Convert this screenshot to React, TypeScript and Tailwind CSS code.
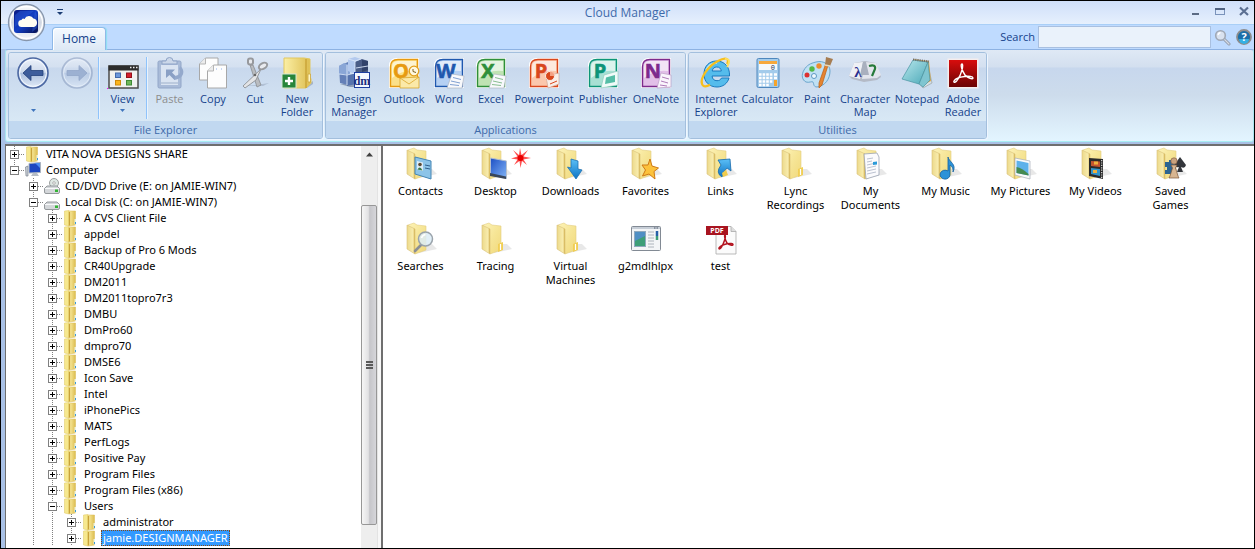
import type { ReactNode } from "react";
import clsx from "clsx";

const folderColors = { light: "#fdf3b8", mid: "#f1d97c", dark: "#d3ae45" };

function Icon({ children, size = 32 }: { children: ReactNode; size?: number }) {
    return (
        <svg width={size} height={size} viewBox={`0 0 ${size} ${size}`} aria-hidden="true" className="shrink-0 overflow-visible">
            {children}
        </svg>
    );
}

function Gradients() {
    return (
        <svg width="0" height="0" className="absolute" aria-hidden="true">
            <defs>
                <linearGradient id="folderBack" x1="0" y1="0" x2="1" y2="1">
                    <stop offset="0" stopColor={folderColors.light} />
                    <stop offset="0.5" stopColor="#f6e596" />
                    <stop offset="1" stopColor={folderColors.mid} />
                </linearGradient>
                <linearGradient id="folderFront" x1="0" y1="0" x2="1" y2="0">
                    <stop offset="0" stopColor="#ecd98a" />
                    <stop offset="0.75" stopColor="#f8ecae" />
                    <stop offset="1" stopColor={folderColors.dark} />
                </linearGradient>
                <linearGradient id="smallFolder" x1="0" y1="0" x2="1" y2="0">
                    <stop offset="0" stopColor="#fbefa5" />
                    <stop offset="1" stopColor="#dcbc4e" />
                </linearGradient>
                <linearGradient id="orb" x1="0" y1="0" x2="0" y2="1">
                    <stop offset="0" stopColor="#fdfdfe" />
                    <stop offset="0.5" stopColor="#cfd6e2" />
                    <stop offset="1" stopColor="#f4f7fb" />
                </linearGradient>
                <linearGradient id="orbBlue" x1="0" y1="0" x2="1" y2="1">
                    <stop offset="0" stopColor="#0b1a80" />
                    <stop offset="0.5" stopColor="#123fc4" />
                    <stop offset="1" stopColor="#06104f" />
                </linearGradient>
                <linearGradient id="navDisc" x1="0" y1="0" x2="0" y2="1">
                    <stop offset="0" stopColor="#eef3fb" />
                    <stop offset="0.48" stopColor="#ccd8eb" />
                    <stop offset="0.5" stopColor="#a9bcdc" />
                    <stop offset="1" stopColor="#e3edf9" />
                </linearGradient>
                <linearGradient id="screen" x1="0" y1="0" x2="1" y2="1">
                    <stop offset="0" stopColor="#1c4fc4" />
                    <stop offset="1" stopColor="#82b4f6" />
                </linearGradient>
                <linearGradient id="blueArrow" x1="0" y1="0" x2="0" y2="1">
                    <stop offset="0" stopColor="#5cc0f7" />
                    <stop offset="1" stopColor="#0d73c4" />
                </linearGradient>
                <linearGradient id="adobe" x1="0" y1="0" x2="0" y2="1">
                    <stop offset="0" stopColor="#d80d0d" />
                    <stop offset="1" stopColor="#6b0303" />
                </linearGradient>
                <linearGradient id="pad" x1="0" y1="0" x2="1" y2="1">
                    <stop offset="0" stopColor="#b9e7ec" />
                    <stop offset="1" stopColor="#4ba9b8" />
                </linearGradient>
            </defs>
        </svg>
    );
}

/* ---------- ribbon icons ---------- */

function NavIcon({ forward }: { forward?: boolean }) {
    return (
        <Icon>
            <g opacity={forward ? 0.5 : 1}>
                <circle cx="16" cy="16" r="15" fill="url(#navDisc)" stroke={forward ? "#7f93b8" : "#4d69a3"} strokeWidth="1.6" />
                <circle cx="16" cy="16" r="13.4" fill="none" stroke="#f5f9ff" strokeWidth="1" />
                <path
                    d={forward ? "M26 16 18 8.500V13.500H6V18.500H18V23.500Z" : "M6 16 14 8.500V13.500H26V18.500H14V23.500Z"}
                    fill={forward ? "#7089b8" : "#3d5c9b"}
                    stroke={forward ? "#5c75a6" : "#223f7a"}
                    strokeWidth="0.8"
                />
            </g>
        </Icon>
    );
}

const ViewIcon = () => (
    <Icon>
        <rect x="2" y="9" width="29" height="22" fill="#f1f1ef" stroke="#4b4b4b" strokeWidth="1.500" />
        <rect x="1.500" y="8.500" width="30" height="5" fill="#2c2c2c" />
        <path d="M23 10.500h1.500M26 10.500h1.500M29 10.500h1.500" stroke="#eee" strokeWidth="1.500" />
        <rect x="8.500" y="16" width="5" height="4.500" fill="#6c97da" stroke="#4168ab" />
        <rect x="19.500" y="16" width="5" height="4.500" fill="#d41c2c" stroke="#941018" />
        <rect x="8.500" y="23.500" width="5" height="4.500" fill="#fbb51c" stroke="#d18b0a" />
        <rect x="19.500" y="23.500" width="5" height="4.500" fill="#6fb65a" stroke="#3f8a35" />
        <rect x="0" y="31" width="1" height="1" fill="#f0f" />
    </Icon>
);

const PasteIcon = () => (
    <Icon>
        <rect x="4" y="4" width="23" height="27" rx="1.500" fill="#a9bbd8" stroke="#92a6c8" />
        <rect x="7" y="8" width="17" height="20" fill="#dae4f2" />
        <path d="M8 7V4h4a3.500 3.500 0 0 1 7 0h4v3Z" fill="#cbd7e9" stroke="#8fa4c7" />
        <path d="M12 12.500h9l-3 3 5 5-2.500 2.500-5-5-3.500 3Z" fill="#8aa0c5" />
        <path d="M26 9c6 4 4 13-6 14l1-4c5-1 6-4 4-7Z" fill="#94a9cc" />
        <path d="M7 26h17" stroke="#bccade" strokeWidth="2" />
    </Icon>
);

const CopyIcon = () => (
    <Icon>
        <path d="M2.500 7 8.500 1H21V23H2.500Z" fill="#fdfdfd" stroke="#a8a8a8" />
        <path d="M2.500 7H8.500V1" fill="#ececec" stroke="#b5b5b5" />
        <path d="M10.500 14 16.500 8H29.500V31H10.500Z" fill="#fdfdfd" stroke="#a8a8a8" />
        <path d="M10.500 14H16.500V8" fill="#ececec" stroke="#b5b5b5" />
        <path d="M19 12h1M24 12h1" stroke="#8fb0ee" />
    </Icon>
);

const CutIcon = () => (
    <Icon>
        <path d="M17 28 30 26 24 29H4Z" fill="#8796ad" opacity="0.4" />
        <path d="M11 8 18 30 22 28 14 8Z" fill="#b9bcc0" stroke="#8a8d91" strokeWidth="0.800" />
        <path d="M22 12 4 29 6 31 17 23Z" fill="#e3e4e6" stroke="#85888c" strokeWidth="0.800" />
        <rect x="9" y="1.500" width="5" height="6" rx="2" fill="#e8eaee" stroke="#97999d" strokeWidth="2" />
        <ellipse cx="24" cy="9" rx="4.500" ry="2.800" transform="rotate(-30 24 9)" fill="#e8eaee" stroke="#97999d" strokeWidth="2" />
        <circle cx="16" cy="18" r="1.300" fill="#666" />
    </Icon>
);

const NewFolderIcon = () => (
    <Icon>
        <path d="M24 30 32 24v3l-6 4Z" fill="#6f7886" opacity="0.4" />
        <path d="M3 1h20l6 1v18l1 2v4l-5 5H3Z" fill="url(#smallFolder)" stroke="#e2c75e" />
        <path d="M25 2v29" stroke="#c59d2f" strokeWidth="1.200" />
        <path d="M27 17h2.500v8H27Z" fill="#fff6c5" stroke="#cba63d" strokeWidth="0.800" />
        <rect x="1" y="17" width="14" height="14" fill="#27853a" stroke="#d6e8d5" />
        <path d="M8 20v8M4 24h8" stroke="#fff" strokeWidth="2.400" />
    </Icon>
);

const DesignManagerIcon = () => (
    <Icon>
        <path d="M2 27 12 30H20V26Z" fill="#4c5d7e" opacity="0.5" />
        <path d="M1 9 10 5V28L2 26Z" fill="#6480b8" />
        <path d="M1 9 6 6 12 8V17H1Z" fill="#8aa6d6" />
        <path d="M10 2 17 0l6 2v12l-6 3-7-3Z" fill="#b3c9ee" />
        <path d="M17 5 24 2l6 2v13H17Z" fill="#4a5c86" />
        <path d="M24 3 30 4V13L24 15Z" fill="#31426a" />
        <path d="M9 17h9v10l-9 2Z" fill="#5673ad" />
        <path d="M1 17 9 18 17 16M9 8V28M17 4V17M10 2 17 4 23 2M18 11 30 9" stroke="#d9e5f8" strokeWidth="0.900" fill="none" />
        <rect x="16.500" y="15.500" width="15" height="15" fill="#f4f8ff" stroke="#1d3fa0" />
        <text x="24" y="28" textAnchor="middle" fontSize="12" fontWeight="700" fontFamily="Liberation Serif, serif" fill="#1c2f7e">dm</text>
    </Icon>
);

function OfficeIcon({ letter, color, tint, kind }: { letter: string; color: string; tint: string; kind: string }) {
    return (
        <Icon>
            <path d="M1 31V9Q1 1 9 1H31V31Z" fill="#fff" />
            <path d="M2.500 29.500V10Q2.500 2.500 10 2.500H29.500V29.500Z" fill={tint} stroke={color} strokeWidth="1.400" />
            <path d="M4 10Q4 4 10 4H28V14Q15 12 4 21Z" fill="#fff" opacity="0.6" />
            <text x="13" y="21" textAnchor="middle" fontSize="20" fontWeight="700" fontFamily="Open Sans, sans-serif" stroke={color} strokeWidth="0.600" fill={color}>{letter}</text>
            {kind === "mail" && (
                <>
                    <path d="M12 21 31 20V31H12Z" fill="#fbe9a8" stroke="#d9a42a" strokeWidth="0.800" />
                    <path d="M12 21 21 27 31 20" fill="none" stroke="#d9a42a" strokeWidth="0.800" />
                    <circle cx="26" cy="14" r="4.800" fill="#fff8e0" stroke="#e1a01e" strokeWidth="1.300" />
                    <path d="M25 12v2.500l3 1" fill="none" stroke="#7d6121" />
                </>
            )}
            {kind === "page" && (
                <>
                    <path d="M19 17 31 19 29 31H14Z" fill="#f8f9fc" stroke="#a8aebb" strokeWidth="0.600" />
                    <path d="M20 20.500l8 2M18 24l9 2M17 27.500l9 1" stroke={color} strokeWidth="1" opacity="0.55" />
                </>
            )}
            {kind === "slide" && (
                <>
                    <path d="M18 19 31 16V27L20 31Z" fill="#f9efe9" stroke="#c99f8d" strokeWidth="0.600" />
                    <circle cx="22" cy="19" r="4.500" fill={color} stroke="#fff" strokeWidth="0.800" />
                    <path d="M22 19V14.500a4.500 4.500 0 0 1 4.500 4.500Z" fill="#f4a183" />
                    <path d="M22 27l7-3" stroke={color} strokeWidth="1" />
                </>
            )}
            {kind === "layout" && (
                <>
                    <path d="M17 18 31 14V28L14 31Z" fill="#f0fbf8" stroke="#8cc8ba" strokeWidth="0.600" />
                    <path d="M19 20.500 28 18V25L18 27Z" fill="#55bda6" />
                </>
            )}
            {kind === "notes" && (
                <>
                    <path d="M21 16 31 18V30L17 31Z" fill="#faf5fc" stroke="#b494bf" strokeWidth="0.600" />
                    <path d="M22 20l7 2M21 24l7 2M20 28l7 1" stroke={color} strokeWidth="1" opacity="0.6" />
                </>
            )}
        </Icon>
    );
}

const ExplorerIcon = () => (
    <Icon>
        <path d="M16.500 4C9 4 4 9.500 4 17c0 8 5.500 13 13 13 6 0 10.500-3.500 12-9h-7.500c-1 2-2.500 2.700-4.500 2.700-3 0-4.700-1.800-4.900-4.700H29.500C30 10 24.500 4 16.500 4Zm-4.300 10c.4-2.600 2.100-4 4.600-4s4.200 1.400 4.500 4Z" fill="#55bcec" stroke="#1a79bd" strokeWidth="1" />
        <path d="M6 13C8 8 12 6 17 6" fill="none" stroke="#b6e5fb" strokeWidth="1.500" />
        <path d="M27 7C30 1 25 0 18 4 8 9 0 21 2 27c1.200 3.500 5 2.500 8 .7" fill="none" stroke="#f7bf1d" strokeWidth="2.200" />
        <path d="M27 10C30 5 30 1.500 25 1.800" fill="none" stroke="#ffdf5c" strokeWidth="1.800" />
    </Icon>
);

const CalculatorIcon = () => (
    <Icon>
        <rect x="5" y="1.500" width="22" height="29" rx="1.500" fill="#a3cbeb" stroke="#4e87bd" />
        <rect x="7" y="4" width="18" height="3" fill="#f6a83c" />
        <rect x="7" y="7" width="18" height="6" fill="#f4f8fb" />
        <text x="23" y="13" textAnchor="end" fontSize="7" fontFamily="Liberation Mono, monospace" fill="#1d3557">0</text>
        <path d="M7 17.500h14M7 21h14M7 24.500h14M7 28h10" stroke="#fff" strokeWidth="2.400" strokeDasharray="2.600 1" />
        <path d="M22 17.500h3M22 21h3" stroke="#fff" strokeWidth="2.400" />
        <rect x="22" y="23" width="3" height="6" fill="#f5a42c" />
    </Icon>
);

const PaintIcon = () => (
    <Icon>
        <path d="M15 5C23 3 29 8 29 14c0 8-5 15-13 16-4 0-3-4-4-5s-4 1-7 0C1 23 0 18 3 13S9 6.500 15 5Z" fill="#bfe0f4" stroke="#6ba6cd" />
        <circle cx="11" cy="12" r="2.700" fill="#52b848" />
        <circle cx="18" cy="9" r="2.700" fill="#ee8c2c" />
        <circle cx="6" cy="18" r="2.500" fill="#dc3131" />
        <circle cx="13" cy="19" r="2.500" fill="#eef8fe" stroke="#5c98c2" />
        <path d="M28 5 21 28 18 31 18 26 25 6Z" fill="#e58430" stroke="#b95f16" strokeWidth="0.700" />
        <path d="M25 0 32 2 29 9 24 8Z" fill="#a67d52" />
        <path d="M24 8 29 9" stroke="#e8d9b8" strokeWidth="1.500" />
    </Icon>
);

const CharMapIcon = () => (
    <Icon>
        <path d="M5 6 16 4 27 6 32 20 28 23 15 25 3 22 0 19Z" fill="#b4bac6" />
        <path d="M5 6 14 5 11 22 0 19Z" fill="#eef0f5" />
        <path d="M16 5 27 6 32 18 28 21 13 22Z" fill="#e2e5ec" />
        <path d="M14 5 17 5 20 18 11 18Z" fill="#a9b0be" />
        <text x="9" y="20" textAnchor="middle" fontSize="15" fontWeight="700" fontFamily="Liberation Serif, serif" fill="#2b2f8e">λ</text>
        <path d="M20 9Q27 7 26 12L23 19" fill="none" stroke="#267a3a" strokeWidth="2.200" />
    </Icon>
);

const NotepadIcon = () => (
    <Icon>
        <path d="M26 4 31 26 22 31 19 27Z" fill="#d6dfe2" stroke="#8e9a9d" strokeWidth="0.600" />
        <path d="M12 2 28 4 30 24 26 26Z" fill="#e0a94a" />
        <path d="M12 3 27 5 18 27 1 22Z" fill="url(#pad)" stroke="#4994a2" strokeWidth="0.700" />
        <path d="M27 5 29 23 22 30 18 27Z" fill="#7fc5d0" stroke="#4994a2" strokeWidth="0.700" />
        <path d="M12 2.500 28 4.500" stroke="#6d6d6d" strokeWidth="2.200" strokeDasharray="1.200 1" />
    </Icon>
);

const AdobeIcon = () => (
    <Icon>
        <rect x="0.500" y="1.500" width="31" height="30" fill="#f5eded" />
        <rect x="2" y="3" width="28" height="27" fill="url(#adobe)" />
        <path d="M15 7C13 7 15 14 18 18c3 3 8 5 8 3 0-3-16-2-19 3-1 2 2 2 4-2 3-4 6-14 4-15Z" fill="none" stroke="#fff" strokeWidth="1.400" />
    </Icon>
);

/* ---------- folder view icons ---------- */

function FolderIcon({ children }: { children?: ReactNode }) {
    return (
        <Icon>
            <path d="M14 30 32 26 27 21H18Z" fill="#8d8d8d" opacity="0.2" />
            <path d="M3 2 9 0 12 2 21 3V27L10 31Z" fill="url(#folderBack)" stroke="#e3cd80" strokeWidth="0.600" />
            <path d="M2 2 10 6V31L2 26Z" fill="url(#folderFront)" stroke="#d9c077" strokeWidth="0.600" />
            {children ?? (
                <>
                    <path d="M18 21 23 19V27L18 29Z" fill="#f1cf55" />
                    <path d="M20.500 21v6" stroke="#fff" strokeWidth="1.200" />
                </>
            )}
        </Icon>
    );
}

const ContactsArt = () => (
    <>
        <path d="M10 9 26 13V31L10 26Z" fill="#8cc4e8" stroke="#4485b4" />
        <path d="M12 13 18 14.500V23L12 21.500Z" fill="#dcecf5" />
        <circle cx="15" cy="16.500" r="1.800" fill="#5c4a34" />
        <path d="M12.500 21.500Q15 17 17.500 22.500Z" fill="#3b7a4b" />
        <path d="M20 17l5 1M20 20l5 1" stroke="#2e5f8c" />
    </>
);

const DesktopArt = () => (
    <>
        <path d="M10.500 10 26.500 13V30.500L10.500 27Z" fill="url(#screen)" stroke="#b4bfce" />
        <path d="M10 25 26 28.500V31L10 28Z" fill="#39465a" />
    </>
);

const DownloadsArt = () => (
    <path d="M16 11 23 13V21L27 22 21 31 12.500 19 16 20Z" fill="url(#blueArrow)" stroke="#1c71b4" strokeWidth="0.800" />
);

const FavoritesArt = () => (
    <path d="M20 11 22 18 28.500 20 24 23.500 25 31 19 26 12.500 28 15.500 22 12 17 18 17Z" fill="#fcc23c" stroke="#cf7a16" strokeWidth="1" />
);

const LinksArt = () => (
    <>
        <path d="M13 12 25 11 26 23 22 20Q18 23 17 29 10 25 16 17Z" fill="url(#blueArrow)" stroke="#1569ac" strokeWidth="0.800" />
        <path d="M17 25 21 22 23 27 18 29Z" fill="#f0cc4d" />
    </>
);

const DocumentsArt = () => (
    <>
        <path d="M9 6 22 5 24 9V27L11 31Z" fill="#fbfbfd" stroke="#99a2b2" strokeWidth="0.800" />
        <path d="M12 11l6-1M12 14l5-1M12 17l9-2M12 20l9-2M12 23l9-2M12 26l9-2" stroke="#aab3c4" strokeWidth="0.800" />
        <path d="M18 14 22 13.500V16.500L18 17Z" fill="#2b9ad8" />
    </>
);

const MusicArt = () => (
    <path d="M18 9C19 14 27 16 23 24c.5-5-2-6-3-7v9a5 4.500 0 1 1-2-3Z" fill="#2c92d8" stroke="#125f9e" strokeWidth="0.800" />
);

const PicturesArt = () => (
    <>
        <path d="M10 10 25 13V31L10 27Z" fill="#fafafa" stroke="#a6adb7" strokeWidth="0.700" />
        <path d="M11.500 12.500 23.500 15V27.500L11.500 25Z" fill="#5db1ea" />
        <path d="M11.500 19Q17 20 23.500 26V27.500L11.500 25Z" fill="#458a50" />
    </>
);

const VideosArt = () => (
    <>
        <path d="M9 10 23 11V31L9 28Z" fill="#2a2a2a" />
        <path d="M11 13 20 13.500V19L11 18Z" fill="#c4542e" />
        <path d="M11 20 20 21V28L11 26Z" fill="#3395cb" />
        <path d="M14 13.500h4v3h-4ZM13 22h4v3h-4Z" fill="#efb13e" />
        <path d="M21.700 12v18" stroke="#ddd" strokeWidth="1.200" strokeDasharray="1.200 1.200" />
    </>
);

const GamesArt = () => (
    <>
        <path d="M10 14h4v-2h3v3h4v11H10v-4h2v-3h-2Z" fill="#2c6591" />
        <path d="M25 9 31 17Q30 21 26 19L28 24H22L24 19Q20 20 20 16Z" fill="#33363b" />
        <circle cx="19" cy="13" r="3.200" fill="#c9a27e" stroke="#7c573a" strokeWidth="0.600" />
        <path d="M16 17h6l-1.500 3L23 28l1 2H14l1-2 2.500-8Z" fill="#d7b591" stroke="#7c573a" strokeWidth="0.700" />
    </>
);

const SearchesArt = () => (
    <>
        <path d="M16 22 10 28" stroke="#8b8f95" strokeWidth="2.600" strokeLinecap="round" />
        <circle cx="20.500" cy="16" r="7" fill="#dcecf6" fillOpacity="0.85" stroke="#9aa3ab" strokeWidth="1.500" />
        <path d="M16.500 15q1-3 4-3.500" fill="none" stroke="#fff" strokeWidth="1.500" />
    </>
);

const ProgramIcon = () => (
    <Icon>
        <rect x="1.500" y="3.500" width="29" height="24" rx="1" fill="#f3f5f7" stroke="#828a94" />
        <path d="M2 5h28" stroke="#c7ced7" strokeWidth="2" />
        <path d="M24 5h1.500M26.500 5H28" stroke="#4c5a6b" />
        <rect x="4.500" y="8.500" width="11" height="15" fill="#3d9e78" stroke="#8fa8bd" />
        <path d="M5 9h10v4L5 18Z" fill="#4f8fc4" />
        <path d="M18 9h6M18 12h6M18 15h6M18 18h6M18 21h6M18 24h6" stroke="#adb4bc" />
        <path d="M27 8v5" stroke="#2660a8" strokeWidth="2.500" />
        <path d="M27 13v4" stroke="#3d9e78" strokeWidth="2.500" />
    </Icon>
);

const PdfIcon = () => (
    <Icon>
        <path d="M11 3.500H26L31 8.500V31H11Z" fill="#fbfbfb" stroke="#a9a9a9" strokeWidth="0.800" />
        <path d="M26 3.500V8.500H31" fill="#dedede" stroke="#a9a9a9" strokeWidth="0.800" />
        <rect x="1" y="3" width="22" height="9" fill="#a81420" />
        <text x="12" y="10" textAnchor="middle" fontSize="7" fontWeight="700" fontFamily="Open Sans, sans-serif" fill="#fff">PDF</text>
        <path d="M20 12C19 12 20 17 22 20c2 2 6 3 6 1.500 0-2-11-1-14 3.500-.5 1.500 1.500 1 2.500-1 2-3 5-11 3.500-12Z" fill="none" stroke="#b3131f" strokeWidth="1.500" />
    </Icon>
);

/* ---------- ribbon ---------- */

type RibbonItem = {
    lines: string[];
    icon: ReactNode;
    width: string;
    label?: string;
    disabled?: boolean;
    menu?: boolean;
    divider?: boolean;
};

const fileExplorer: RibbonItem[] = [
    { lines: [""], label: "Back", icon: <NavIcon />, width: "w-[44px]", menu: true },
    { lines: [], label: "Forward", icon: <NavIcon forward />, width: "w-[43px]" },
    { lines: ["View"], icon: <ViewIcon />, width: "w-[48px]", menu: true, divider: true },
    { lines: ["Paste"], icon: <PasteIcon />, width: "w-[46px]", disabled: true, divider: true },
    { lines: ["Copy"], icon: <CopyIcon />, width: "w-[42px]" },
    { lines: ["Cut"], icon: <CutIcon />, width: "w-[42px]" },
    { lines: ["New", "Folder"], icon: <NewFolderIcon />, width: "w-[42px]" },
];

const applications: RibbonItem[] = [
    { lines: ["Design", "Manager"], icon: <DesignManagerIcon />, width: "w-[52px]" },
    { lines: ["Outlook"], icon: <OfficeIcon letter="O" color="#e79a10" tint="#fbe08a" kind="mail" />, width: "w-[48px]" },
    { lines: ["Word"], icon: <OfficeIcon letter="W" color="#1f58ae" tint="#b5d0f3" kind="page" />, width: "w-[42px]" },
    { lines: ["Excel"], icon: <OfficeIcon letter="X" color="#2f8f3a" tint="#bfe3b3" kind="page" />, width: "w-[42px]" },
    { lines: ["Powerpoint"], icon: <OfficeIcon letter="P" color="#d9471c" tint="#fbc7ac" kind="slide" />, width: "w-[64px]" },
    { lines: ["Publisher"], icon: <OfficeIcon letter="P" color="#0d9478" tint="#a8e0d3" kind="layout" />, width: "w-[54px]" },
    { lines: ["OneNote"], icon: <OfficeIcon letter="N" color="#7d2a8c" tint="#e2bfe8" kind="notes" />, width: "w-[52px]" },
];

const utilities: RibbonItem[] = [
    { lines: ["Internet", "Explorer"], icon: <ExplorerIcon />, width: "w-[50px]" },
    { lines: ["Calculator"], icon: <CalculatorIcon />, width: "w-[53px]" },
    { lines: ["Paint"], icon: <PaintIcon />, width: "w-[46px]" },
    { lines: ["Character", "Map"], icon: <CharMapIcon />, width: "w-[50px]" },
    { lines: ["Notepad"], icon: <NotepadIcon />, width: "w-[54px]" },
    { lines: ["Adobe", "Reader"], icon: <AdobeIcon />, width: "w-[38px]" },
];

function RibbonButton({ item }: { item: RibbonItem }) {
    return (
        <button
            type="button"
            aria-label={item.label}
            disabled={item.disabled}
            className={clsx(
                "flex h-[62px] shrink-0 flex-col items-center whitespace-nowrap text-[11px] leading-[13px]",
                item.width,
                item.disabled ? "text-[#8d8d8d]" : "text-[#15428b]",
                item.divider && "border-l border-[#8fc3fb] shadow-[inset_1px_0_0_#e9f3fd]"
            )}
        >
            {item.icon}
            <span className="mt-[3px] flex flex-col items-center">
                {item.lines.map((line, i) => (
                    <span key={i} className="h-[13px]">{line}</span>
                ))}
                {item.menu && (
                    <svg width="5" height="3" viewBox="0 0 5 3" className="mt-1" aria-hidden="true">
                        <path d="M0 0H5L2.500 3Z" fill="#3f75bd" />
                    </svg>
                )}
            </span>
        </button>
    );
}

function RibbonGroup({ title, items, padding }: { title: string; items: RibbonItem[]; padding: string }) {
    return (
        <section
            aria-label={title}
            className="flex flex-col overflow-hidden rounded-[3px] border border-[#a3bfdd] shadow-[1px_1px_0_#eef6ff]"
        >
            <div className={clsx("flex h-[68px] bg-[linear-gradient(#dde8f5_0,#d4e0f0_14px,#c8d8ed_15px,#d8e8f5_100%)] pt-1", padding)}>
                {items.map((item) => (
                    <RibbonButton key={item.label ?? item.lines.join(" ")} item={item} />
                ))}
            </div>
            <h2 className="h-[17px] bg-[#c1d8f0] text-center text-[11px] leading-[17px] text-[#3e6aaa]">{title}</h2>
        </section>
    );
}

/* ---------- title bar ---------- */

function TitleBar() {
    return (
        <header className="relative flex h-6 items-center justify-center border-b border-[#a9cff7] bg-[linear-gradient(#cfdff9,#e6f0fd)]">
            <button type="button" aria-label="Application menu" className="absolute top-[2px] left-[6px] z-10">
                <svg width="40" height="40" viewBox="0 0 40 40" aria-hidden="true">
                    <circle cx="19.500" cy="19.500" r="18" fill="url(#orb)" stroke="#8796ac" strokeWidth="1.300" />
                    <circle cx="19.500" cy="19.500" r="16" fill="none" stroke="#fff" strokeWidth="1.300" />
                    <rect x="7" y="7" width="24" height="23" rx="3" fill="url(#orbBlue)" />
                    <path d="M8 12 13 8H27L19 14 8 24Z" fill="#2c60e0" opacity="0.450" />
                    <path d="M28 8 30 12V25L25 29Z" fill="#3b6ff0" opacity="0.350" />
                    <path d="M15 24a3.500 3.500 0 0 1-.5-7 2 2 0 0 1 3-1 5 5 0 0 1 9-.5A4.400 4.400 0 0 1 27 24Z" fill="#fffdf2" />
                </svg>
            </button>
            <button type="button" aria-label="Customize quick access" className="absolute top-[8px] left-[56px]">
                <svg width="6" height="6" viewBox="0 0 6 6" aria-hidden="true">
                    <path d="M0 0.500H6" stroke="#1b3c73" />
                    <path d="M0 3H6L3 6Z" fill="#1b3c73" />
                </svg>
            </button>
            <h1 className="text-[12px] leading-[22px] text-[#3e6aaa]">Cloud Manager</h1>
            <div className="absolute top-[5px] right-[5px] flex gap-[14px]">
                <button type="button" aria-label="Minimize">
                    <svg width="10" height="10" viewBox="0 0 10 10"><path d="M1 8H8" stroke="#5b6b84" strokeWidth="2" /></svg>
                </button>
                <button type="button" aria-label="Maximize">
                    <svg width="10" height="10" viewBox="0 0 10 10">
                        <rect x="0.500" y="2.500" width="9" height="6" fill="none" stroke="#7a93bb" />
                        <path d="M0 3H10" stroke="#4f6180" strokeWidth="2" />
                    </svg>
                </button>
                <button type="button" aria-label="Close">
                    <svg width="10" height="10" viewBox="0 0 10 10"><path d="M1 1.500 9 9M9 1.500 1 9" stroke="#5b6f92" strokeWidth="2.200" /></svg>
                </button>
            </div>
        </header>
    );
}

function TabRow() {
    return (
        <div className="flex h-6 items-end bg-[#bfdbff] pr-[2px]">
            <nav className="ml-[51px]">
                <button
                    type="button"
                    className="relative top-px block h-[23px] w-[54px] rounded-t-[4px] border border-b-0 border-[#8fb9e8] bg-[linear-gradient(#f4f9ff,#dde8f5)] text-[12px] leading-[22px] text-[#15428b] shadow-[inset_1px_1px_0_#ffffff,1px_0_1px_#8fe0f0]"
                >
                    Home
                </button>
            </nav>
            <div className="ml-auto flex h-6 items-center">
                <label htmlFor="search" className="mr-[3px] text-[11px] text-[#15428b]">Search</label>
                <input id="search" type="text" className="h-[22px] w-[173px] border border-[#a9c0e0] bg-[#eaf2fb] px-1 text-[11px] outline-none" />
                <button type="button" aria-label="Find" className="ml-[3px]">
                    <svg width="17" height="17" viewBox="0 0 17 17">
                        <path d="M10 10 15 15" stroke="#8e98a8" strokeWidth="3" strokeLinecap="round" />
                        <path d="M10 10 15 15" stroke="#d5dbe4" strokeWidth="1.200" strokeLinecap="round" />
                        <circle cx="6.500" cy="6.500" r="4.800" fill="#d9e2ef" stroke="#a0a8b5" strokeWidth="1.600" />
                        <path d="M4 6q.5-2 2.500-2.500" fill="none" stroke="#fff" strokeWidth="1.300" />
                    </svg>
                </button>
                <button type="button" aria-label="Help" className="ml-[5px]">
                    <svg width="16" height="16" viewBox="0 0 16 16">
                        <circle cx="8" cy="8" r="7" fill="#1a6ea8" stroke="#8c8c8c" strokeWidth="1.800" />
                        <path d="M3 10a5 5 0 0 0 10 0Z" fill="#35b0e4" />
                        <text x="8" y="12" textAnchor="middle" fontSize="11" fontWeight="700" fontFamily="Open Sans, sans-serif" fill="#fff">?</text>
                    </svg>
                </button>
            </div>
        </div>
    );
}

/* ---------- folder tree ---------- */

type TreeNode = { name: string; level: number; open?: boolean; kind?: "computer" | "cd" | "disk"; selected?: boolean };

const tree: TreeNode[] = [
    { name: "VITA NOVA DESIGNS SHARE", level: 0 },
    { name: "Computer", level: 0, open: true, kind: "computer" },
    { name: "CD/DVD Drive (E: on JAMIE-WIN7)", level: 1, kind: "cd" },
    { name: "Local Disk (C: on JAMIE-WIN7)", level: 1, open: true, kind: "disk" },
    { name: "A CVS Client File", level: 2 },
    { name: "appdel", level: 2 },
    { name: "Backup of Pro 6 Mods", level: 2 },
    { name: "CR40Upgrade", level: 2 },
    { name: "DM2011", level: 2 },
    { name: "DM2011topro7r3", level: 2 },
    { name: "DMBU", level: 2 },
    { name: "DmPro60", level: 2 },
    { name: "dmpro70", level: 2 },
    { name: "DMSE6", level: 2 },
    { name: "Icon Save", level: 2 },
    { name: "Intel", level: 2 },
    { name: "iPhonePics", level: 2 },
    { name: "MATS", level: 2 },
    { name: "PerfLogs", level: 2 },
    { name: "Positive Pay", level: 2 },
    { name: "Program Files", level: 2 },
    { name: "Program Files (x86)", level: 2 },
    { name: "Users", level: 2, open: true },
    { name: "administrator", level: 3 },
    { name: "jamie.DESIGNMANAGER", level: 3, selected: true },
];

function Guide({ visible }: { visible: boolean }) {
    return (
        <svg width="19" height="16" viewBox="0 0 19 16" className="shrink-0" aria-hidden="true">
            {visible && <path d="M8.500 0V16" stroke="#808080" strokeDasharray="1 1" />}
        </svg>
    );
}

function Expander({ open, last }: { open?: boolean; last?: boolean }) {
    return (
        <svg width="19" height="16" viewBox="0 0 19 16" aria-hidden="true">
            <path d={last ? "M8.500 0V8" : "M8.500 0V16"} stroke="#808080" strokeDasharray="1 1" />
            <path d="M13 8.500H19" stroke="#808080" strokeDasharray="1 1" />
            <rect x="4.500" y="4.500" width="8" height="8" fill="#fff" stroke="#808080" />
            <path d={open ? "M6 8.500H11" : "M6 8.500H11M8.500 6V11"} stroke="#000" />
        </svg>
    );
}

function TreeIcon({ kind }: { kind?: TreeNode["kind"] }) {
    if (kind === "computer") {
        return (
            <Icon size={16}>
                <path d="M0.500 5 3 4V14H1Z" fill="#c6ccd4" stroke="#7c858f" strokeWidth="0.700" />
                <path d="M4 1.500 15.500 0.500V10.500L4 11Z" fill="#1c46c0" stroke="#aab3bf" />
                <path d="M10 1 15 1V6Z" fill="#4c8cf0" />
                <path d="M8 11h4l2 3H6Z" fill="#b5bcc5" />
            </Icon>
        );
    }
    if (kind) {
        return (
            <Icon size={16}>
                {kind === "cd" && (
                    <>
                        <circle cx="10" cy="5" r="4.500" fill="#dfe8e4" stroke="#9b9f9f" />
                        <circle cx="10" cy="5" r="1.300" fill="#fff" stroke="#8a8a8a" strokeWidth="0.600" />
                    </>
                )}
                <path d="M3 8H13L15.500 10.500V14Q15.500 15.500 14 15.500H2Q0.500 15.500 0.500 14V10.500Z" fill="#d4d7da" stroke="#7f8488" strokeWidth="0.800" />
                <path d="M1 10.500H15" stroke="#f8f9fa" />
                <rect x="11" y="11.500" width="3" height="2.500" fill="#32b333" />
            </Icon>
        );
    }
    return (
        <Icon size={16}>
            <path d="M1.500 1 6 0.500V16L1.500 15Z" fill="#f6e88f" stroke="#dfc761" strokeWidth="0.500" />
            <path d="M6 1H12.500V15L6 16Z" fill="url(#smallFolder)" stroke="#d8bb52" strokeWidth="0.500" />
            <path d="M6.500 2V15.500" stroke="#c9a33a" strokeWidth="1.200" />
            <path d="M11.500 9H13V14.500H11.500Z" fill="#eef3df" />
            <path d="M12.500 12v2" stroke="#3b98d8" />
        </Icon>
    );
}

function TreeRow({ node }: { node: TreeNode }) {
    return (
        <li className="flex h-4 items-center whitespace-nowrap" role="treeitem" aria-selected={!!node.selected}>
            {Array.from({ length: node.level }, (_, i) => (
                <Guide key={i} visible={i > 0} />
            ))}
            <button type="button" aria-label={node.open ? "Collapse" : "Expand"} className="shrink-0">
                <Expander open={node.open} last={node.kind === "computer"} />
            </button>
            <TreeIcon kind={node.kind} />
            <span
                className={clsx(
                    "ml-[3px] h-4 px-[2px] text-[11px] leading-4",
                    node.selected ? "bg-[#3399ff] text-white outline-1 -outline-offset-1 outline-dotted outline-[#8a4a10]" : "text-black"
                )}
            >
                {node.name}
            </span>
        </li>
    );
}

function TreeScrollbar() {
    return (
        <div className="flex w-4 shrink-0 flex-col bg-[#eeeeee]" aria-hidden="true">
            <div className="flex h-[59px] justify-center pt-[6px]">
                <svg width="7" height="5" viewBox="0 0 7 5"><path d="M3.500 0.500 7 4.500H0Z" fill="#404040" /></svg>
            </div>
            <div className="flex flex-1 items-center justify-center rounded-[2px] border border-[#979797] bg-[linear-gradient(90deg,#f6f6f6,#e2e2e4_45%,#c6c6ca_55%,#d6d6da)]">
                <svg width="7" height="9" viewBox="0 0 7 9"><path d="M0 1H7M0 4H7M0 7H7" stroke="#5a5a5a" strokeWidth="2" /></svg>
            </div>
            <div className="h-[23px]" />
        </div>
    );
}

/* ---------- files ---------- */

const files: { lines: string[]; icon: ReactNode }[] = [
    { lines: ["Contacts"], icon: <FolderIcon><ContactsArt /></FolderIcon> },
    { lines: ["Desktop"], icon: <FolderIcon><DesktopArt /></FolderIcon> },
    { lines: ["Downloads"], icon: <FolderIcon><DownloadsArt /></FolderIcon> },
    { lines: ["Favorites"], icon: <FolderIcon><FavoritesArt /></FolderIcon> },
    { lines: ["Links"], icon: <FolderIcon><LinksArt /></FolderIcon> },
    { lines: ["Lync", "Recordings"], icon: <FolderIcon /> },
    { lines: ["My", "Documents"], icon: <FolderIcon><DocumentsArt /></FolderIcon> },
    { lines: ["My Music"], icon: <FolderIcon><MusicArt /></FolderIcon> },
    { lines: ["My Pictures"], icon: <FolderIcon><PicturesArt /></FolderIcon> },
    { lines: ["My Videos"], icon: <FolderIcon><VideosArt /></FolderIcon> },
    { lines: ["Saved", "Games"], icon: <FolderIcon><GamesArt /></FolderIcon> },
    { lines: ["Searches"], icon: <FolderIcon><SearchesArt /></FolderIcon> },
    { lines: ["Tracing"], icon: <FolderIcon /> },
    { lines: ["Virtual", "Machines"], icon: <FolderIcon /> },
    { lines: ["g2mdlhlpx"], icon: <ProgramIcon /> },
    { lines: ["test"], icon: <PdfIcon /> },
];

function Spark() {
    return (
        <svg width="20" height="20" viewBox="0 0 20 20" className="absolute top-0 left-[53px]" aria-hidden="true">
            <path d="M9 0 10.500 7 17 2 12.500 8.500 20 10 12.500 11.500 16 17 11 13 9.500 20 8.500 13 3 17 6.500 11.500 0 10.500 6.500 8.500 2 2 8 7Z" fill="#ff5050" />
            <circle cx="9.500" cy="10" r="3" fill="#e80000" />
        </svg>
    );
}

export default function App() {
    return (
        <div className="flex h-screen flex-col overflow-hidden border border-black bg-[#a9c1e6] font-['Open_Sans','Noto_Sans',sans-serif]">
            <Gradients />
            <TitleBar />
            <TabRow />
            <div className="ml-1 flex gap-[2px] rounded-[3px] border border-t-[#8db2e3] border-r-[#a9e6f0] border-b-[#a8eef2] border-l-[#a9e6f0] bg-[linear-gradient(#dfe9f5_0,#d3dfef_17px,#c7d7ed_18px,#cddcec_45px,#e3f5ff_100%)] px-[2px] pt-[2px] pb-[2px]">
                <RibbonGroup title="File Explorer" items={fileExplorer} padding="pl-[2px] pr-[4px]" />
                <RibbonGroup title="Applications" items={applications} padding="pl-[2px] pr-[3px]" />
                <RibbonGroup title="Utilities" items={utilities} padding="pl-[2px] pr-[4px]" />
            </div>
            <main className="mt-[2px] ml-1 flex min-h-0 flex-1 border-t-2 border-[#6f6f6f] bg-white font-['Noto_Sans',sans-serif]">
                <aside className="flex w-[372px] shrink-0 overflow-hidden border-l border-[#6f6f6f]" aria-label="Folders">
                    <ul role="tree" className="min-w-0 flex-1">
                        {tree.map((node) => (
                            <TreeRow key={node.name} node={node} />
                        ))}
                    </ul>
                    <TreeScrollbar />
                </aside>
                <div className="w-1 shrink-0 border-l border-[#e3e3e3] bg-[#f7f7f7]" />
                <section aria-label="Files" className="min-w-0 flex-1 border-l-2 border-[#6f6f6f] pt-[2px]">
                    <ul className="grid grid-cols-[repeat(auto-fill,75px)] auto-rows-[75px]">
                        {files.map((file) => (
                            <li key={file.lines[0]} className="relative">
                                <button type="button" className="flex w-full flex-col items-center text-[11px] leading-[14px] whitespace-nowrap text-black">
                                    {file.icon}
                                    <span className="mt-1 flex flex-col items-center">
                                        {file.lines.map((line) => (
                                            <span key={line}>{line}</span>
                                        ))}
                                    </span>
                                </button>
                                {file.lines[0] === "Desktop" && <Spark />}
                            </li>
                        ))}
                    </ul>
                </section>
            </main>
        </div>
    );
}
